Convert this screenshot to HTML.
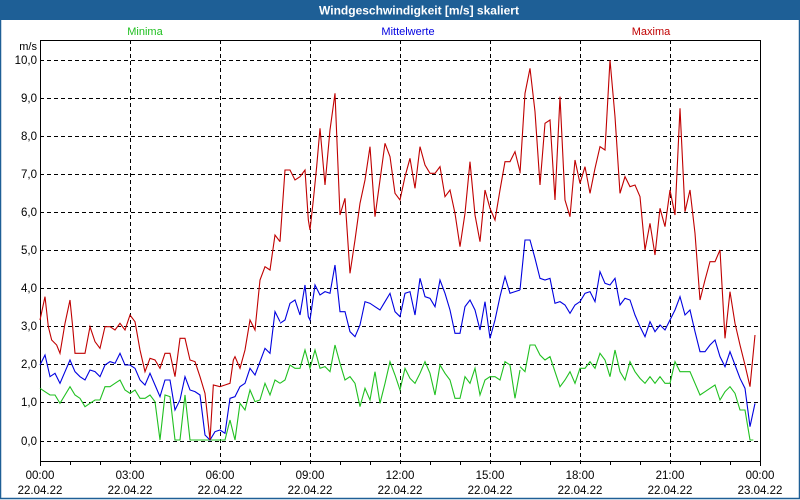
<!DOCTYPE html>
<html><head><meta charset="utf-8"><style>
html,body{margin:0;padding:0;background:#fff;}
body{width:800px;height:500px;overflow:hidden;position:relative;font-family:"Liberation Sans",sans-serif;}
</style></head><body>
<svg width="800" height="500" viewBox="0 0 800 500" xmlns="http://www.w3.org/2000/svg" style="position:absolute;left:0;top:0" font-family="Liberation Sans, sans-serif">
<rect x="0" y="0" width="800" height="500" fill="#fff"/>
<rect x="0.5" y="0.5" width="799" height="498" fill="none" stroke="#1e5f96" stroke-width="1.5"/>
<rect x="0" y="0" width="800" height="20" fill="#1e5f96"/>
<text x="419" y="14.5" text-anchor="middle" fill="#fff" font-weight="bold" font-size="12">Windgeschwindigkeit [m/s] skaliert</text>
<g font-size="11">
<text x="145" y="35" text-anchor="middle" fill="#20c020">Minima</text>
<text x="408" y="35" text-anchor="middle" fill="#0000e0">Mittelwerte</text>
<text x="651" y="35" text-anchor="middle" fill="#c00000">Maxima</text>
<text x="37" y="50" text-anchor="end" fill="#000">m/s</text>
</g>
<g stroke="#000" stroke-width="1" stroke-dasharray="4,3" fill="none" shape-rendering="crispEdges">
<line x1="40" y1="60.5" x2="760" y2="60.5"/>
<line x1="40" y1="98.5" x2="760" y2="98.5"/>
<line x1="40" y1="136.5" x2="760" y2="136.5"/>
<line x1="40" y1="174.5" x2="760" y2="174.5"/>
<line x1="40" y1="212.5" x2="760" y2="212.5"/>
<line x1="40" y1="250.5" x2="760" y2="250.5"/>
<line x1="40" y1="288.5" x2="760" y2="288.5"/>
<line x1="40" y1="326.5" x2="760" y2="326.5"/>
<line x1="40" y1="364.5" x2="760" y2="364.5"/>
<line x1="40" y1="402.5" x2="760" y2="402.5"/>
<line x1="40" y1="441.5" x2="760" y2="441.5"/>
<line x1="130.5" y1="40" x2="130.5" y2="466"/>
<line x1="220.5" y1="40" x2="220.5" y2="466"/>
<line x1="310.5" y1="40" x2="310.5" y2="466"/>
<line x1="400.5" y1="40" x2="400.5" y2="466"/>
<line x1="490.5" y1="40" x2="490.5" y2="466"/>
<line x1="580.5" y1="40" x2="580.5" y2="466"/>
<line x1="670.5" y1="40" x2="670.5" y2="466"/>
</g>
<g stroke="#000" stroke-width="1" fill="none" shape-rendering="crispEdges">
<polyline points="40.5,466 40.5,40.5 760.5,40.5 760.5,461.5 40,461.5"/>
<path d="M70.5 461v4M100.5 461v4M160.5 461v4M190.5 461v4M250.5 461v4M280.5 461v4M340.5 461v4M370.5 461v4M430.5 461v4M460.5 461v4M520.5 461v4M550.5 461v4M610.5 461v4M640.5 461v4M700.5 461v4M730.5 461v4M760.5 461v5"/>
</g>
<g font-size="11.5" fill="#000" text-anchor="end">
<text x="37" y="64">10,0</text><text x="37" y="102">9,0</text><text x="37" y="140">8,0</text><text x="37" y="178">7,0</text><text x="37" y="216">6,0</text><text x="37" y="254">5,0</text><text x="37" y="292">4,0</text><text x="37" y="330">3,0</text><text x="37" y="368">2,0</text><text x="37" y="406">1,0</text><text x="37" y="445">0,0</text>
</g>
<g font-size="11.5" fill="#000" text-anchor="middle">
<text x="40" y="479">00:00</text><text x="40" y="494">22.04.22</text>
<text x="130" y="479">03:00</text><text x="130" y="494">22.04.22</text>
<text x="220" y="479">06:00</text><text x="220" y="494">22.04.22</text>
<text x="310" y="479">09:00</text><text x="310" y="494">22.04.22</text>
<text x="400" y="479">12:00</text><text x="400" y="494">22.04.22</text>
<text x="490" y="479">15:00</text><text x="490" y="494">22.04.22</text>
<text x="580" y="479">18:00</text><text x="580" y="494">22.04.22</text>
<text x="670" y="479">21:00</text><text x="670" y="494">22.04.22</text>
<text x="760" y="479">00:00</text><text x="760" y="494">23.04.22</text>
</g>
<g fill="none" stroke-width="1.1">
<g transform="translate(40,40) scale(0.33333)">
<polyline vector-effect="non-scaling-stroke" stroke="#20c020" points="0,1045 15,1055 30,1065 45,1065 60,1090 75,1065 90,1040 105,1065 120,1075 135,1100 150,1090 165,1080 180,1080 195,1040 210,1040 225,1030 240,1020 255,1050 270,1060 285,1050 300,1075 315,1075 330,1065 345,1085 360,1200 375,1065 390,1070 405,1200 420,1200 435,1065 450,1200 495,1200 510,1200 555,1200 570,1140 585,1200 600,1090 615,1110 630,1050 645,1085 660,1080 675,1030 690,1065 705,1020 720,1030"/>
<polyline vector-effect="non-scaling-stroke" stroke="#0000e0" points="0,975 15,945 30,1010 45,1000 60,1030 75,995 90,960 105,995 120,1010 135,1020 150,990 165,995 180,1010 195,975 210,965 225,970 240,940 255,975 270,975 285,985 300,1020 315,1035 330,1000 345,1035 360,1070 375,1020 390,1020 405,1110 420,1080 435,1010 450,1050 465,1055 480,1065 495,1185 510,1200 525,1175 540,1170 555,1180 570,1075 585,1070 600,1040 615,1030 630,985 645,1005 660,965 675,925 690,940 705,815 720,845"/>
<polyline vector-effect="non-scaling-stroke" stroke="#c00000" points="0,840 15,770 25,860 35,900 50,915 60,940 75,850 90,780 98,860 105,940 135,940 150,860 165,905 180,925 195,860 210,860 225,870 240,850 255,870 270,825 285,845 300,930 315,995 330,955 345,960 360,985 375,940 390,940 405,1010 420,895 435,895 450,960 465,965 480,1010 495,1060 510,1200 520,1035 540,1040 555,1035 570,1030 580,960 585,950 600,985 615,930 630,840 645,870 660,720 675,680 690,690 705,585 720,605"/>
</g>
<g transform="translate(280,40) scale(0.33333)">
<polyline vector-effect="non-scaling-stroke" stroke="#20c020" points="0,1030 15,1020 30,975 45,985 60,985 75,930 90,985 105,930 120,985 135,980 150,995 165,915 180,970 195,1020 210,1010 225,1030 240,1100 255,1045 270,1080 285,995 300,1090 315,1030 330,965 345,1005 360,1050 375,985 390,1015 405,1030 420,1000 435,965 450,1000 465,1065 480,975 495,1000 510,1020 525,1075 540,1075 555,1010 570,1030 585,985 600,1065 615,1020 630,1010 645,1010 660,1020 675,965 690,975 705,1075 720,990"/>
<polyline vector-effect="non-scaling-stroke" stroke="#0000e0" points="0,850 15,840 30,790 45,780 60,825 75,735 85,830 90,840 105,735 120,765 135,755 150,760 165,675 180,815 195,815 210,875 225,890 240,855 255,785 270,790 285,800 300,810 315,785 330,760 345,815 360,830 375,760 390,755 405,825 420,715 435,770 450,775 465,800 480,720 495,760 510,810 525,880 540,880 555,800 570,780 585,810 600,870 615,785 630,895 645,840 660,770 675,710 690,760 705,755 720,750"/>
<polyline vector-effect="non-scaling-stroke" stroke="#c00000" points="0,605 15,390 30,390 45,420 60,410 75,390 85,540 90,570 100,480 110,380 120,265 135,435 150,270 165,160 180,525 195,475 210,700 225,600 240,490 255,420 270,320 285,530 300,420 315,310 330,350 345,460 360,480 375,410 390,355 405,445 420,320 435,375 450,400 465,400 480,380 495,470 510,450 525,520 540,620 555,520 570,365 585,525 600,605 615,450 630,505 645,540 660,450 675,365 690,365 705,335 720,395"/>
</g>
<g transform="translate(520,40) scale(0.33333)">
<polyline vector-effect="non-scaling-stroke" stroke="#20c020" points="0,980 15,995 30,915 45,915 60,945 75,960 90,950 105,995 120,1040 135,1020 150,995 165,1030 180,985 195,985 210,965 225,985 240,940 255,960 270,1010 285,930 300,995 315,1020 330,965 345,995 360,1015 375,1030 390,1010 405,1030 420,1010 435,1030 450,1030 465,965 480,995 495,995 510,995 525,1030 540,1065 555,1055 570,1045 585,1035 600,1080 615,1055 630,1040 645,1060 660,1110 675,1110 690,1200 700,1200"/>
<polyline vector-effect="non-scaling-stroke" stroke="#0000e0" points="0,750 15,600 30,600 45,655 60,715 75,720 90,715 105,790 120,785 135,795 150,820 165,795 180,785 195,760 210,755 225,785 240,695 255,730 270,735 285,715 300,795 315,775 330,780 345,825 360,860 375,890 390,845 405,875 420,855 435,870 450,840 465,810 480,770 495,825 510,810 525,875 540,935 555,935 570,915 585,900 600,950 615,980 630,935 645,975 660,1015 675,1045 690,1160 705,1090"/>
<polyline vector-effect="non-scaling-stroke" stroke="#c00000" points="0,400 15,160 30,85 45,215 60,435 75,250 90,240 105,480 120,170 135,480 150,530 165,360 180,430 195,380 210,460 225,385 240,320 255,330 270,60 285,230 300,460 315,410 330,440 345,435 360,470 375,630 390,550 405,645 420,505 435,560 450,450 465,525 480,205 495,515 510,450 525,580 540,780 555,720 570,665 585,665 600,630 615,895 630,755 645,850 660,915 675,975 690,1040 705,885"/>
</g>
</g>
</svg>
</body></html>
